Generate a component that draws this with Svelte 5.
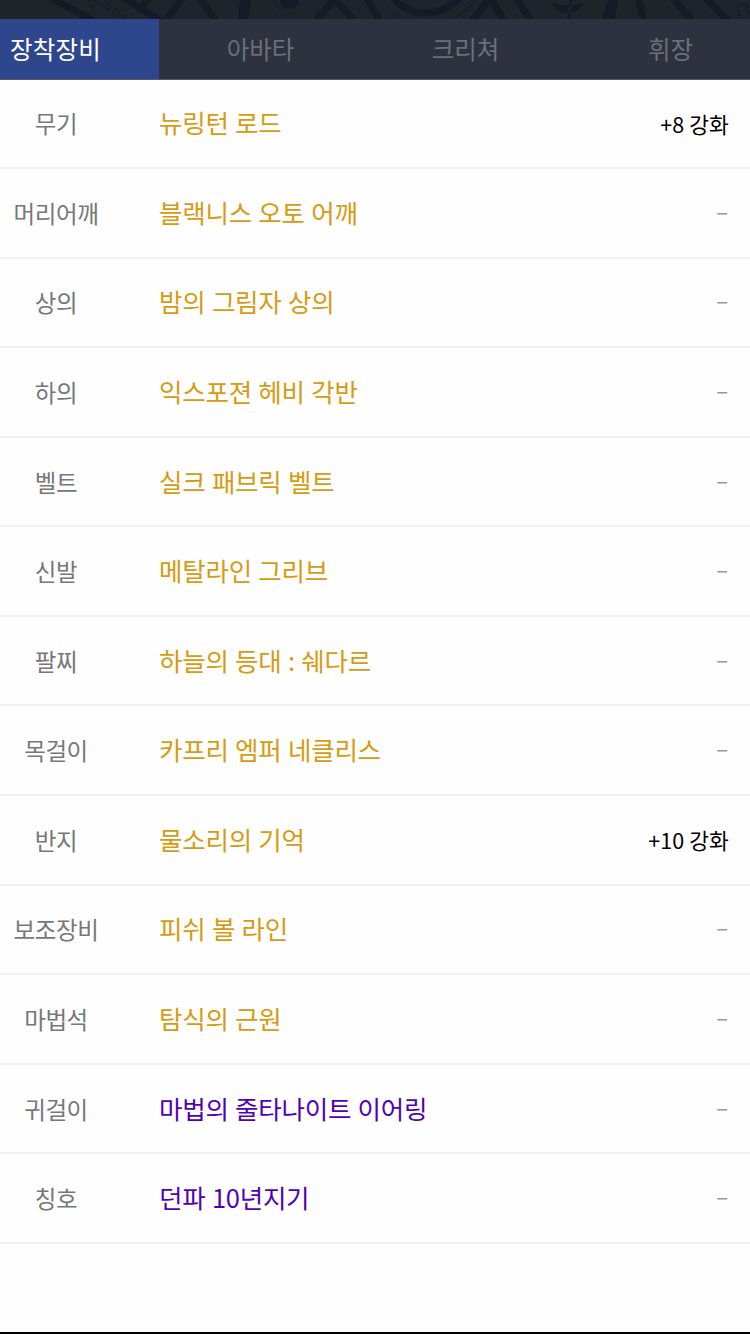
<script>
    import {createEventDispatcher} from "svelte";
    const dispatch = createEventDispatcher();

    let tabs = ["장착장비", "아바타", "크리쳐", "휘장"];
    let activeTab = "장착장비";

    let items = [
        {slot: "무기", name: "뉴링턴 로드", rarity: "unique", upgrade: "+8 강화"},
        {slot: "머리어깨", name: "블랙니스 오토 어깨", rarity: "unique"},
        {slot: "상의", name: "밤의 그림자 상의", rarity: "unique"},
        {slot: "하의", name: "익스포젼 헤비 각반", rarity: "unique"},
        {slot: "벨트", name: "실크 패브릭 벨트", rarity: "unique"},
        {slot: "신발", name: "메탈라인 그리브", rarity: "unique"},
        {slot: "팔찌", name: "하늘의 등대 : 쉐다르", rarity: "unique"},
        {slot: "목걸이", name: "카프리 엠퍼 네클리스", rarity: "unique"},
        {slot: "반지", name: "물소리의 기억", rarity: "unique", upgrade: "+10 강화"},
        {slot: "보조장비", name: "피쉬 볼 라인", rarity: "unique"},
        {slot: "마법석", name: "탐식의 근원", rarity: "unique"},
        {slot: "귀걸이", name: "마법의 줄타나이트 이어링", rarity: "rare"},
        {slot: "칭호", name: "던파 10년지기", rarity: "rare"}
    ];

    function selectTab(tab){
        activeTab = tab;
        dispatch("select", {selection: tab});
    }
</script>

<div class="page">
    <svg class="banner" viewBox="0 0 750 19" aria-hidden="true">
        <g fill="none" stroke="#151a26" stroke-width="7">
            <path d="M51 -2 L94 21 M122 -3 L161 21 M150 -3 L138 11" />
            <path d="M183 -3 L165 21 M199 -3 L216 21 M336 -3 L316 21 M333 -3 L354 21 M366 -3 L380 21" />
            <path d="M390 -5 Q405 13 425 13 Q447 13 462 -5" />
            <path d="M491 -3 L472 21 M490 -3 L504 21 M515 -3 L531 21 M638 -3 L644 21 M672 -3 L692 21 M705 -3 L728 21" />
        </g>
        <path fill="#151a26" d="M240 0 H251 L248 19 H238 Z M280 0 Q280 9 290 9 Q299 8 299 0 Z M608 0 H618 L615 19 H602 Z" />
        <path fill="#151a26" d="M552 3 Q555 13 568 13 Q580 13 583 3 Q568 8 552 3 Z M570 0 L572 0 L570 19 L567 19 Z" />
        <g fill="none" stroke="#171c27" stroke-width="1.5">
            <path d="M275 0 Q277 7 281 10 M384 21 Q390 17 398 15 M448 21 Q463 15 472 4" />
            <path d="M88 1 Q94 -1 99 3 Q94 8 89 5 M102 4 L108 10 M106 3 Q113 6 108 10 M115 9 Q123 12 116 16 Q110 14 115 9 M119 18 Q122 12 125 19" />
            <path d="M738 7 Q742 2 748 6 Q742 9 749 13 M739 10 Q736 15 742 16" />
        </g>
    </svg>
    <div class="tabs">
        {#each tabs as tab}
            <button class="tab" class:active={tab === activeTab} on:click={() => selectTab(tab)}>{tab}</button>
        {/each}
    </div>
    <div class="list">
        {#each items as item}
            <div class="listItem">
                <span class="slot">{item.slot}</span>
                <span class="name {item.rarity}">{item.name}</span>
                {#if item.upgrade}
                    <span class="upgrade">{item.upgrade}</span>
                {:else}
                    <span class="none">–</span>
                {/if}
            </div>
        {/each}
    </div>
</div>

<style>
:global(body){
    margin: 0;
    background: #fefefe;
}
.page{
    display: flex;
    flex-direction: column;
    box-sizing: border-box;
    width: 750px;
    height: 1334px;
    border-bottom: 2px solid #000;
    font-family: "Noto Sans CJK KR", sans-serif;
    font-weight: 400;
    white-space: nowrap;
}
.banner{
    flex: none;
    height: 19px;
    background: #1f242a;
}
.tabs{
    flex: none;
    display: flex;
    box-sizing: border-box;
    height: 61px;
    overflow: hidden;
    background: #2d323e;
    border-bottom: 1px solid #545a6c;
}
/* the row runs past the right edge, the last tab is cut off */
.tab{
    flex: none;
    box-sizing: border-box;
    width: 205px;
    border: 0;
    margin: 0;
    padding: 0 2px 0 0;
    background: none;
    color: #697077;
    font-family: inherit;
    font-size: 24.5px;
    line-height: 60px;
    cursor: pointer;
}
.tab.active{
    width: 159px;
    padding: 0 0 0 10px;
    text-align: left;
    color: #fff;
    background: #2e468c;
    letter-spacing: .2px;
}
.list{
    flex: none;
    margin-top: -.6px;
}
.listItem{
    display: flex;
    align-items: center;
    box-sizing: border-box;
    height: 89.58px;
    padding-right: 21px;
    border-bottom: 2px solid #f1f1f1;
}
.slot{
    width: 112px;
    margin-right: 47px;
    text-align: center;
    font-size: 23.5px;
    color: #777;
    letter-spacing: -.4px;
}
.name{
    flex: 1;
    padding-bottom: 3px;
    font-size: 25.5px;
    letter-spacing: -.25px;
    word-spacing: 1px;
}
.unique{
    color: #d69b10;
}
.rare{
    color: #5000b8;
}
.upgrade{
    font-size: 21.5px;
    letter-spacing: .1px;
    color: #000;
}
.none{
    padding: 0 1px 6px 0;
    font-size: 22px;
    color: #999;
}
</style>
